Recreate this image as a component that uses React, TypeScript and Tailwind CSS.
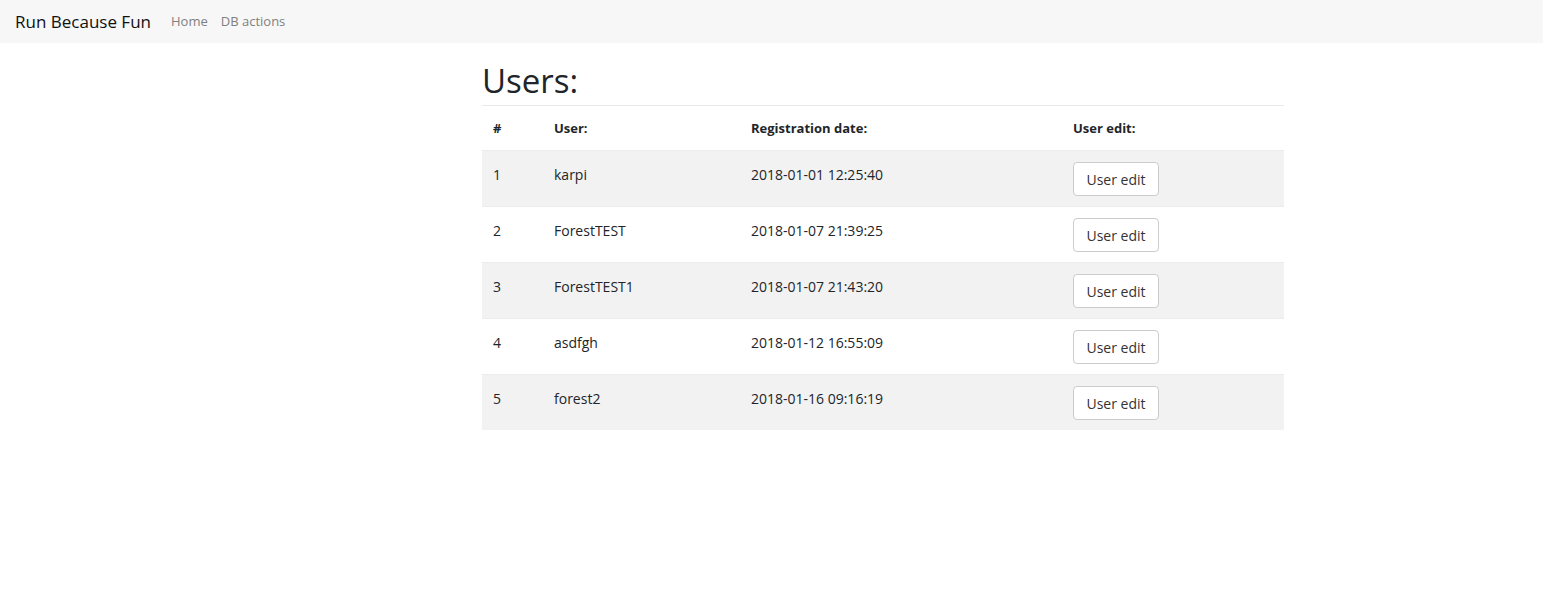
import React from 'react';

const USERS = [
  { id: 1, name: 'karpi', date: '2018-01-01 12:25:40' },
  { id: 2, name: 'ForestTEST', date: '2018-01-07 21:39:25' },
  { id: 3, name: 'ForestTEST1', date: '2018-01-07 21:43:20' },
  { id: 4, name: 'asdfgh', date: '2018-01-12 16:55:09' },
  { id: 5, name: 'forest2', date: '2018-01-16 09:16:19' },
];

export default function App() {
  return (
    <div className="min-h-screen bg-white text-[#212529] font-['Open_Sans',sans-serif]">
      {/* Navbar */}
      <nav className="flex h-[43px] items-center bg-[#f7f7f7] px-[15px]">
        <span className="text-[17px] text-[#111]">Run Because Fun</span>
        <div className="ml-[20px] flex gap-[13px] text-[13px] text-[#808080]">
          <a>Home</a>
          <a>DB actions</a>
        </div>
      </nav>

      <main className="ml-[482px] w-[802px] pt-[15px]">
        <h1 className="border-b border-[#eaeaea] pb-[2px] text-[33px] font-normal leading-[45px]">Users:</h1>

        <table className="w-full table-fixed border-collapse text-[14px]">
          <colgroup>
            <col className="w-[60px]" />
            <col className="w-[197px]" />
            <col className="w-[322px]" />
            <col />
          </colgroup>
          <thead>
            <tr className="text-left">
              <th className="px-[11px] py-[12px] font-bold leading-[20px] text-[13px]">#</th>
              <th className="px-[12px] py-[12px] font-bold leading-[20px] text-[13px]">User:</th>
              <th className="px-[12px] py-[12px] font-bold leading-[20px] text-[13px]">Registration date:</th>
              <th className="px-[12px] py-[12px] font-bold leading-[20px] text-[13px]">User edit:</th>
            </tr>
          </thead>
          <tbody>
            {USERS.map((u, i) => (
              <tr
                key={u.id}
                className={i % 2 === 0 ? 'border-t border-[#ececec] bg-[#f2f2f2]' : 'border-t border-[#ececec]'}
              >
                <td className={`${i % 2 === 0 && i < 4 ? 'h-[56px]' : 'h-[55px]'} px-[11px] pt-[12px] align-top leading-[24px]`}>
                  {u.id}
                </td>
                <td className="px-[12px] pt-[12px] align-top leading-[24px]">{u.name}</td>
                <td className="px-[12px] pt-[12px] align-top leading-[24px]">{u.date}</td>
                <td className="px-[12px] pt-[11px] pb-[10px] align-top">
                  <button className="h-[34px] w-[86px] rounded-[4px] border border-[#cccccc] bg-white text-[14px] text-[#333]">
                    User edit
                  </button>
                </td>
              </tr>
            ))}
          </tbody>
        </table>
      </main>
    </div>
  );
}
